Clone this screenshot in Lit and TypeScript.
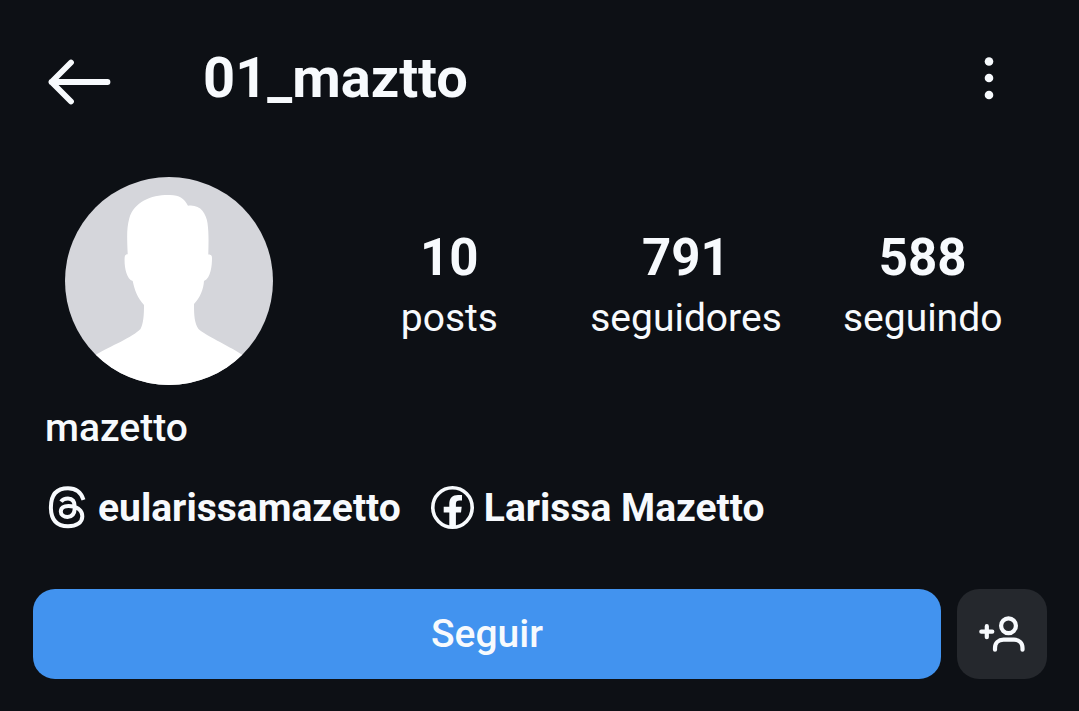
import { LitElement, html, css } from "lit";
import { customElement } from "lit/decorators.js";

const stats = [
  { value: "10", label: "posts" },
  { value: "791", label: "seguidores" },
  { value: "588", label: "seguindo" },
];

@customElement("app-root")
export class AppRoot extends LitElement {
  static styles = css`
    :host {
      display: block;
      min-height: 100vh;
      box-sizing: border-box;
      padding: 44px 32px 32px 33px;
      background: #0d1015;
      color: #f7fafd;
      font-family: Roboto, "Liberation Sans", sans-serif;
    }
    * { box-sizing: border-box; }
    svg { display: block; flex: none; }
    button {
      border: 0;
      padding: 0;
      background: none;
      color: inherit;
      font: inherit;
      cursor: pointer;
    }
    a { color: inherit; text-decoration: none; }
    .bar {
      display: flex;
      align-items: center;
      padding: 0 48px 0 14px;
    }
    .back { padding-top: 8px; }
    .title {
      flex: 1;
      margin: 0;
      padding-left: 92px;
      font-size: 56px;
      line-height: 68px;
      font-weight: 700;
    }
    .summary {
      display: flex;
      align-items: center;
      gap: 58px;
      margin-top: 65px;
      padding: 0 6px 0 32px;
    }
    .stats {
      flex: 1;
      display: grid;
      grid-template-columns: repeat(3, 1fr);
      margin: 0;
      padding-top: 10px;
    }
    .stat {
      display: flex;
      flex-direction: column-reverse;
      align-items: center;
    }
    .stat dt { font-size: 39px; line-height: 56px; }
    .stat dd { margin: 0; font-size: 51px; line-height: 64px; font-weight: 700; }
    .name {
      margin: 17px 0 0;
      padding-left: 12px;
      font-size: 39px;
      line-height: 52px;
      font-weight: 500;
    }
    .links {
      display: flex;
      flex-wrap: wrap;
      gap: 30px;
      margin-top: 28px;
      padding-left: 14px;
    }
    .link {
      display: flex;
      align-items: center;
      gap: 10px;
      font-size: 39px;
      line-height: 52px;
      font-weight: 700;
    }
    .actions {
      display: flex;
      gap: 16px;
      margin-top: 55px;
    }
    .follow, .suggest { height: 90px; border-radius: 22px; }
    .follow {
      flex: 1;
      background: #4293ef;
      font-size: 39px;
      font-weight: 500;
    }
    .suggest {
      width: 90px;
      display: grid;
      place-items: center;
      background: #25282d;
    }
  `;

  render() {
    return html`
      <header class="bar">
        <button class="back" aria-label="Voltar">
          <svg width="64" height="48" viewBox="0 0 64 48" fill="none" stroke="currentColor" stroke-width="5.8" stroke-linecap="round" stroke-linejoin="round">
            <path d="M24 4.500 4.500 24 24 43.500M4.500 24H60.500" />
          </svg>
        </button>
        <h1 class="title">01_maztto</h1>
        <button aria-label="Mais opções">
          <svg width="20" height="48" viewBox="0 0 20 48" fill="currentColor">
            <circle cx="10" cy="7.5" r="4.3" />
            <circle cx="10" cy="24" r="4.3" />
            <circle cx="10" cy="41" r="4.3" />
          </svg>
        </button>
      </header>

      <section class="summary">
        <svg width="208" height="208" viewBox="0 0 208 208" role="img" aria-label="Foto do perfil">
          <defs><clipPath id="round"><circle cx="104" cy="104" r="104" /></clipPath></defs>
          <g clip-path="url(#round)">
            <rect width="208" height="208" fill="#d5d6db" />
            <path fill="#fff" d="M62.7 77.3C62 60 61.500 52 64.300 41.300C69 25 86 18 103 18C114 17.500 119 21 123 28.700C135 27 141 36 142.500 46C144 57 143.500 67 143.300 77.500C146.500 77.500 147 79 147 81C147 88 146 101 139 104C138.500 112 135 121 129 127C129 139 129.500 146 133.500 152C140 158 162 168 176 177L208 200V208H0V200L32 177C44 170 68 160 75.500 152C78.500 146 79 138 79 128C72.500 121 69.500 113 67.700 104C61 102 59 88 59.700 80C60 78 61 77.300 62.700 77.300Z" />
          </g>
        </svg>
        <dl class="stats">
          ${stats.map((s) => html`<div class="stat"><dt>${s.label}</dt><dd>${s.value}</dd></div>`)}
        </dl>
      </section>

      <p class="name">mazetto</p>

      <nav class="links">
        <a class="link" href="#threads">
          <svg width="41" height="46" viewBox="0 0 41 46" fill="none" stroke="currentColor" stroke-width="4" stroke-linecap="butt">
            <path d="M36.500 14.800C34 7 28.500 3.200 21 3.200C9.500 3.200 3.900 10 3.900 22.300C3.900 34.500 9.500 41.200 21 41.200C29.500 41.200 35.300 37.500 35.300 31.500C35.300 24.500 29 20.900 21.500 20.900C16.500 20.900 13.800 23.200 13.800 26.500C13.800 29.800 16.800 31.900 20.500 31.900C25.500 31.900 27.800 28 27.800 22C27.800 16.300 25.500 13.400 21 13.400C17.800 13.400 15.500 14.500 14 16.600" />
          </svg>
          <span>eularissamazetto</span>
        </a>
        <a class="link" href="#facebook">
          <svg width="43" height="46" viewBox="0 0 43 46" fill="none" stroke="currentColor">
            <circle cx="21.500" cy="22.500" r="19.700" stroke-width="3.600" />
            <path fill="currentColor" stroke="none" d="M18.300 42V27.500H12.700V21.700H18.300V19C18.300 13 21.500 10 27 10H31V15.500H28.500C26 15.500 24.900 16.500 24.900 19V21.700H30.700L30 27.500H24.900V42Z" />
          </svg>
          <span>Larissa Mazetto</span>
        </a>
      </nav>

      <div class="actions">
        <button class="follow">Seguir</button>
        <button class="suggest" aria-label="Sugestões de contas">
          <svg width="48" height="40" viewBox="0 0 48 40" fill="none" stroke="currentColor" stroke-width="4.200" stroke-linecap="round">
            <path d="M3.300 17.700H14.300M8.800 12.200V23.200" />
            <circle cx="30.500" cy="11.700" r="7.400" />
            <path d="M17 35.700V34C17 29 20.500 25.700 25.500 25.700H36C41 25.700 44.500 29 44.500 34V35.700" />
          </svg>
        </button>
      </div>
    `;
  }
}
